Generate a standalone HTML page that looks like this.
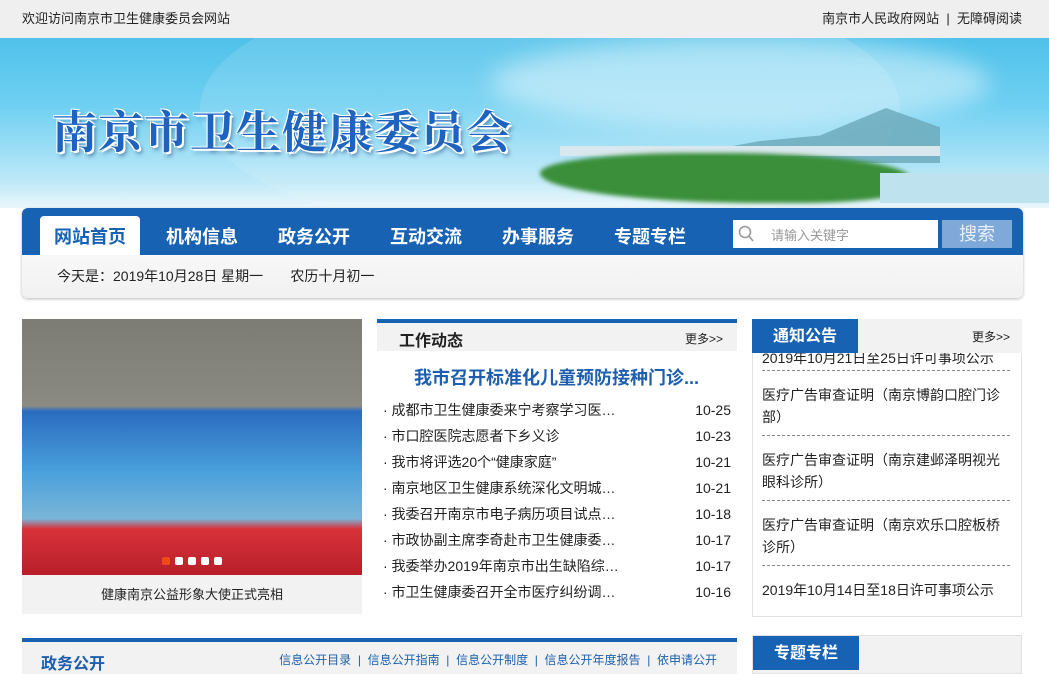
<!DOCTYPE html>
<html><head><meta charset="utf-8">
<style>
*{margin:0;padding:0;box-sizing:border-box}
body{width:1049px;height:674px;overflow:hidden;background:#fff;font-family:"Liberation Sans","Noto Sans CJK SC",sans-serif;color:#222;position:relative}
.abs{position:absolute}
.top{left:0;top:0;width:1049px;height:38px;background:#efefef;font-size:13px;line-height:38px}
.banner{left:0;top:38px;width:1049px;height:170px;background:linear-gradient(180deg,#4fc1ea 0%,#6fd0f2 40%,#bfe9f8 85%,#eaf7fc 100%);overflow:hidden}
.title{left:52px;top:96px;font-size:45px;font-weight:bold;color:#1e63c0;letter-spacing:1px;font-family:"Noto Serif CJK SC",serif;text-shadow:2px 2px 0 #fff,-1px -1px 0 #fff,1px -1px 0 #fff,-1px 1px 0 #fff,3px 4px 4px rgba(0,40,100,.5)}
.navbox{left:22px;top:208px;width:1001px;height:90px;background:linear-gradient(#fff,#f1f1f1);border-radius:6px;box-shadow:0 1px 3px #bbb}
.navbar{left:22px;top:208px;width:1001px;height:47px;background:#1862b3;border-radius:6px 6px 0 0}
.nav{top:216px;height:39px;line-height:42px;font-size:18px;font-weight:bold;color:#fff}
.nav.on{background:#fff;color:#1862b3;border-radius:4px 4px 0 0;padding:0 14px;left:40px}
.sel{left:733px;top:220px;width:205px;height:28px;background:#fff}
.btn{left:942px;top:220px;width:70px;height:28px;background:#7ea9d8;color:#e8f0fa;font-size:18px;text-align:center;line-height:28px}
.date{left:57px;top:266px;font-size:14px}
.photo{left:22px;top:319px;width:340px;height:256px;background:linear-gradient(180deg,#7d7c74 0%,#8b8a82 34%,#2a6cc0 36%,#4aa1dc 60%,#7ab5d8 78%,#d8323a 82%,#b81f2a 100%)}
.cap{left:22px;top:575px;width:340px;height:39px;background:#f2f2f2;text-align:center;line-height:39px;font-size:13px}
.hd{height:32px;background:#f2f2f2}
.list{font-size:14px;line-height:26px}
.list div{display:flex;justify-content:space-between}
.dash{border-bottom:1px dashed #888}
</style></head><body>
<div class="abs top"><span style="position:absolute;left:22px">欢迎访问南京市卫生健康委员会网站</span><span style="position:absolute;right:27px">南京市人民政府网站 &nbsp;|&nbsp; 无障碍阅读</span></div>
<div class="abs banner">
<div class="abs" style="left:200px;top:-60px;width:700px;height:260px;border-radius:50%;background:rgba(255,255,255,.12)"></div>
<div class="abs" style="left:490px;top:0;width:500px;height:90px;border-radius:50%;background:rgba(255,255,255,.45);filter:blur(12px)"></div>
<div class="abs" style="left:640px;top:70px;width:300px;height:55px;background:#6aa8b8;clip-path:polygon(0 100%,40% 60%,60% 50%,82% 0,100% 35%,100% 100%);opacity:.8"></div>
<div class="abs" style="left:560px;top:108px;width:380px;height:10px;background:#d8e8ee"></div>
<div class="abs" style="left:540px;top:115px;width:370px;height:50px;background:#3b8f3a;border-radius:40% 50% 30% 60%;filter:blur(2px)"></div>
<div class="abs" style="left:880px;top:135px;width:169px;height:30px;background:#bfe3ee"></div>
</div>
<div class="abs title">南京市卫生健康委员会</div>
<div class="abs navbox"></div>
<div class="abs navbar"></div>
<div class="abs nav on">网站首页</div>
<div class="abs nav" style="left:166px">机构信息</div>
<div class="abs nav" style="left:278px">政务公开</div>
<div class="abs nav" style="left:390px">互动交流</div>
<div class="abs nav" style="left:502px">办事服务</div>
<div class="abs nav" style="left:614px">专题专栏</div>
<div class="abs sel"><svg class="abs" style="left:5px;top:5px" width="18" height="18"><circle cx="7" cy="7" r="5.5" fill="none" stroke="#999" stroke-width="1.6"/><line x1="11" y1="11" x2="15" y2="16" stroke="#999" stroke-width="1.6"/></svg><span class="abs" style="left:38px;top:5px;font-size:13px;color:#999">请输入关键字</span></div>
<div class="abs btn">搜索</div>
<div class="abs date">今天是：2019年10月28日 星期一 &nbsp; &nbsp; &nbsp; 农历十月初一</div>

<div class="abs photo"></div>
<div class="abs" style="left:162px;top:557px;display:flex;gap:5px"><i style="width:8px;height:8px;background:#f04a1c;border-radius:2px"></i><i style="width:8px;height:8px;background:#fff;border-radius:2px"></i><i style="width:8px;height:8px;background:#fff;border-radius:2px"></i><i style="width:8px;height:8px;background:#fff;border-radius:2px"></i><i style="width:8px;height:8px;background:#fff;border-radius:2px"></i></div>
<div class="abs cap">健康南京公益形象大使正式亮相</div>

<div class="abs hd" style="left:377px;top:319px;width:360px;border-top:4px solid #1862b3"><span class="abs" style="left:22px;top:4px;font-size:16px;font-weight:bold">工作动态</span><span class="abs" style="right:14px;top:7px;font-size:12px">更多&gt;&gt;</span></div>
<div class="abs" style="left:414px;top:364px;font-size:18px;font-weight:bold;color:#1d5fae">我市召开标准化儿童预防接种门诊...</div>
<div class="abs list" style="left:383px;top:397px;width:348px">
<div><span>· 成都市卫生健康委来宁考察学习医…</span><span>10-25</span></div>
<div><span>· 市口腔医院志愿者下乡义诊</span><span>10-23</span></div>
<div><span>· 我市将评选20个“健康家庭”</span><span>10-21</span></div>
<div><span>· 南京地区卫生健康系统深化文明城…</span><span>10-21</span></div>
<div><span>· 我委召开南京市电子病历项目试点…</span><span>10-18</span></div>
<div><span>· 市政协副主席李奇赴市卫生健康委…</span><span>10-17</span></div>
<div><span>· 我委举办2019年南京市出生缺陷综…</span><span>10-17</span></div>
<div><span>· 市卫生健康委召开全市医疗纠纷调…</span><span>10-16</span></div>
</div>

<div class="abs" style="left:752px;top:319px;width:270px;height:298px;border:1px solid #e2e2e2"></div>
<div class="abs" style="left:762px;top:353px;width:248px;font-size:14px;line-height:22px">
<div class="dash" style="height:24px;overflow:hidden;margin-top:-6px;padding-top:0">2019年10月21日至25日许可事项公示</div>
<div class="dash" style="padding:13px 0 7px">医疗广告审查证明（南京博韵口腔门诊部）</div>
<div class="dash" style="padding:13px 0 7px">医疗广告审查证明（南京建邺泽明视光眼科诊所）</div>
<div class="dash" style="padding:13px 0 7px">医疗广告审查证明（南京欢乐口腔板桥诊所）</div>
<div style="padding:13px 0 8px">2019年10月14日至18日许可事项公示</div>
</div>
<div class="abs hd" style="left:752px;top:319px;width:270px;height:34px"><span class="abs" style="left:0;top:0;width:106px;height:34px;background:#1862b3;color:#fff;font-size:16px;font-weight:bold;line-height:36px;text-align:center">通知公告</span><span class="abs" style="right:12px;top:9px;font-size:12px">更多&gt;&gt;</span></div>

<div class="abs hd" style="left:22px;top:638px;width:715px;height:36px;border-top:4px solid #1862b3"><span class="abs" style="left:19px;top:8px;font-size:16px;font-weight:bold;color:#1d5fae">政务公开</span><span class="abs" style="right:20px;top:9px;font-size:12px;color:#1d5fae">信息公开目录 &nbsp;| &nbsp;信息公开指南 &nbsp;| &nbsp;信息公开制度 &nbsp;| &nbsp;信息公开年度报告 &nbsp;| &nbsp;依申请公开</span></div>
<div class="abs hd" style="left:752px;top:635px;width:270px;height:39px;border:1px solid #e2e2e2"><span class="abs" style="left:0;top:0;width:106px;height:34px;background:#1862b3;color:#fff;font-size:16px;font-weight:bold;line-height:36px;text-align:center">专题专栏</span></div>
</body></html>
